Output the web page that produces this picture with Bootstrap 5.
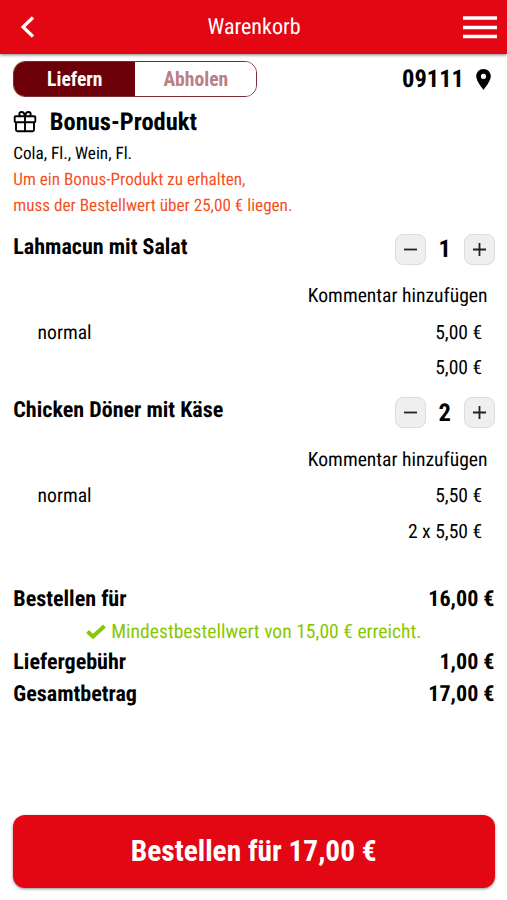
<!DOCTYPE html>
<html lang="de">
<head>
<meta charset="utf-8">
<meta name="viewport" content="width=device-width, initial-scale=1">
<title>Warenkorb</title>
<link href="https://cdn.jsdelivr.net/npm/bootstrap@5.3.0/dist/css/bootstrap.min.css" rel="stylesheet">
<style>
body{font-family:"Roboto Condensed",Roboto,"Liberation Sans",sans-serif;font-stretch:75%;text-rendering:geometricPrecision;color:#000;background:#fff;font-size:19.6px;line-height:26px;white-space:nowrap}
.topbar{height:54px;background:#e30613;box-shadow:0 1px 3px rgba(0,0,0,.5);padding:0 10px 0 20px}
.topbar h1{font-size:22.05px;line-height:54px;padding-left:10px;padding-top:2px}
.content{padding:7px 12.500px 0 13.300px}
.toggle{width:244px;height:36px;border:1px solid #7a2a30;border-radius:12px;overflow:hidden}
.toggle button{font:inherit;font-weight:700;border:0;background:#fff;color:#b98086;padding:2px 0 0}
.toggle .on{background:#6b0008;color:#fff}
.zip{font-size:24.5px;gap:11.500px;padding-right:4px}
.bonus{padding-top:12.400px}
.bonus h2{font-size:24.5px;line-height:26px;gap:12.500px;margin-bottom:7px}
.bonus p{font-size:17.15px;line-height:25.700px}
.warn{color:#f4511e}
.items{padding-top:14px}
.item{margin-bottom:11.800px}
.item h3{font-size:22.05px;line-height:28px;margin:0}
.head{height:31px;margin-bottom:13.600px}
.qty{width:31px;height:31px;border:1px solid #dcdcdc;border-radius:8px;background:#efefef;padding:0}
.num{width:37.500px;font-size:24.5px}
.line{height:36.400px;padding-right:7px}
.price{padding:0 12.300px 0 24.300px}
.unit{height:34.600px}
.totals{font-size:22.05px;padding-top:23.300px}
.totals .trow{height:32px}
.totals .trow:last-child{height:33.500px}
.ok{color:#88c800;height:30.400px;font-size:19.6px;gap:5px}
.footer-bar{padding:0 12.500px 12.500px 13px}
.order{height:73px;border-radius:12px;background:#e30613;color:#fff;font-size:29.4px;border:0;box-shadow:0 1px 3px rgba(0,0,0,.45)}
</style>
</head>
<body class="d-flex flex-column min-vh-100">
<svg width="0" height="0" class="d-none"><symbol id="minus" viewBox="0 0 29 29"><path d="M8 14.500h13" stroke="#222" stroke-width="1.800"/></symbol><symbol id="plus" viewBox="0 0 29 29"><path d="M8 14.500h13M14.500 8v13" stroke="#222" stroke-width="1.800"/></symbol></svg>
<header class="topbar d-flex align-items-center justify-content-between">
<svg width="15" height="24" viewBox="0 0 15 24"><path d="M13 2.500L3 12l10 9.500" fill="none" stroke="#fff" stroke-width="3.200"/></svg>
<h1 class="m-0 text-white fw-normal">Warenkorb</h1>
<svg width="34" height="24"><path d="M0 3h34M0 12.500h34M0 21.500h34" stroke="#fff" stroke-width="3.500"/></svg>
</header>
<main class="content flex-grow-1">
<div class="d-flex justify-content-between align-items-center">
<div class="toggle d-flex"><button class="on w-50">Liefern</button><button class="w-50">Abholen</button></div>
<strong class="zip d-flex align-items-center">09111
<svg width="15" height="21" viewBox="0 0 15 21"><path fill-rule="evenodd" d="M7.500 0C3.400 0 .2 3.200.2 7.300c0 5.200 7.300 13.500 7.300 13.500s7.300-8.300 7.300-13.500C14.800 3.200 11.600 0 7.500 0zm0 4.700a2.600 2.600 0 1 1 0 5.200 2.600 2.600 0 0 1 0-5.200z"/></svg></strong>
</div>
<section class="bonus">
<h2 class="d-flex align-items-center fw-bold"><svg width="24" height="22" viewBox="0 0 24 22" fill="none" stroke="#000" stroke-width="1.900"><rect x="1.700" y="5.200" width="20.600" height="6" rx="1"/><path d="M3 11.200v7.500q0 1.500 1.500 1.500h15q1.500 0 1.500-1.500v-7.500M12 5.200v15M11.700 5.200C11.500 2 10 1 8.600 1S6.300 2.200 6.300 3.200 7 5.200 8 5.200M12.300 5.200C12.500 2 14 1 15.400 1s2.300 1.200 2.300 2.200S17 5.200 16 5.200"/></svg>Bonus-Produkt</h2>
<p class="m-0">Cola, Fl., Wein, Fl.</p>
<p class="m-0 warn">Um ein Bonus-Produkt zu erhalten,<br>muss der Bestellwert über 25,00 € liegen.</p>
</section>
<section class="items">
<article class="item">
<div class="head d-flex justify-content-between"><h3 class="fw-bold">Lahmacun mit Salat</h3><div class="d-flex align-items-center"><button class="qty d-flex" aria-label="Weniger"><svg width="29" height="29"><use href="#minus"/></svg></button><strong class="num text-center">1</strong><button class="qty d-flex" aria-label="Mehr"><svg width="29" height="29"><use href="#plus"/></svg></button></div></div>
<div class="line d-flex align-items-center justify-content-end">Kommentar hinzufügen</div>
<div class="line price d-flex align-items-center justify-content-between"><span>normal</span><span>5,00 €</span></div>
<div class="line price unit d-flex align-items-center justify-content-end">5,00 €</div>
</article>
<article class="item">
<div class="head d-flex justify-content-between"><h3 class="fw-bold">Chicken Döner mit Käse</h3><div class="d-flex align-items-center"><button class="qty d-flex" aria-label="Weniger"><svg width="29" height="29"><use href="#minus"/></svg></button><strong class="num text-center">2</strong><button class="qty d-flex" aria-label="Mehr"><svg width="29" height="29"><use href="#plus"/></svg></button></div></div>
<div class="line d-flex align-items-center justify-content-end">Kommentar hinzufügen</div>
<div class="line price d-flex align-items-center justify-content-between"><span>normal</span><span>5,50 €</span></div>
<div class="line price unit d-flex align-items-center justify-content-end">2 x 5,50 €</div>
</article>
</section>
<section class="totals fw-bold">
<div class="trow d-flex align-items-center justify-content-between"><span>Bestellen für</span><span>16,00 €</span></div>
<div class="ok d-flex align-items-center justify-content-center fw-normal"><svg width="20" height="16" viewBox="0 0 20 16"><path d="M1.500 7.500l5.500 5L18.500 2" fill="none" stroke="#88c800" stroke-width="4"/></svg>Mindestbestellwert von 15,00 € erreicht.</div>
<div class="trow d-flex align-items-center justify-content-between"><span>Liefergebühr</span><span>1,00 €</span></div>
<div class="trow d-flex align-items-center justify-content-between"><span>Gesamtbetrag</span><span>17,00 €</span></div>
</section>
</main>
<footer class="footer-bar"><button class="order d-block fw-bold w-100">Bestellen für 17,00 €</button></footer>
<script src="https://cdn.jsdelivr.net/npm/bootstrap@5.3.0/dist/js/bootstrap.bundle.min.js"></script>
</body>
</html>
